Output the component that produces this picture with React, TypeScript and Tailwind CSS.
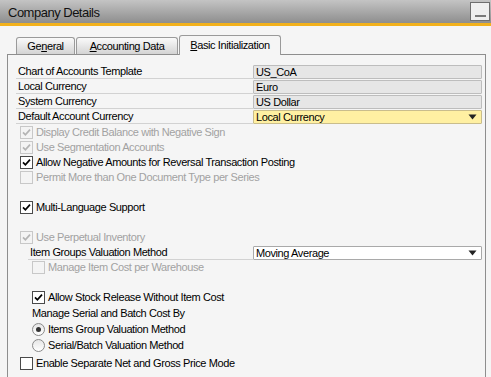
import React from "react";

function Check({ checked, disabled }: { checked?: boolean; disabled?: boolean }) {
  return (
    <span
      className={
        disabled
          ? "w-[13px] h-[13px] shrink-0 border border-[#c8c8c8] bg-[#f4f4f4] flex items-center justify-center"
          : "w-[13px] h-[13px] shrink-0 border border-[#4a4a4a] bg-white flex items-center justify-center"
      }
    >
      {checked && (
        <svg width="11" height="11" viewBox="0 0 11 11">
          <path d="M2 5.3 L4.4 7.8 L9 2.6" fill="none" stroke={disabled ? "#b4b4b4" : "#000"} strokeWidth="1.7" />
        </svg>
      )}
    </span>
  );
}

function Radio({ selected }: { selected?: boolean }) {
  return (
    <span className="w-[13px] h-[13px] shrink-0 rounded-full border border-[#8a8a8a] bg-gradient-to-b from-[#e6e6e6] to-white flex items-center justify-center">
      {selected && <span className="w-[5px] h-[5px] rounded-full bg-[#333]" />}
    </span>
  );
}

function Arrow() {
  return (
    <svg width="9" height="6" viewBox="0 0 9 6" className="mr-[4px]">
      <path d="M0.5 0.5 H8.5 L4.5 5.5 Z" fill="#222" />
    </svg>
  );
}

function FieldRow({ label, value, yellow, dropdown }: { label: string; value: string; yellow?: boolean; dropdown?: boolean }) {
  return (
    <div className="flex h-[15px] pl-[8px]">
      <div className="w-[237px] border-b border-[#d2d2d2] pl-[2px] flex items-center text-black leading-none">{label}</div>
      <div
        className={
          yellow
            ? "mt-[1px] h-[14px] w-[229px] border border-[#c9bd8c] bg-[#fff0a2] rounded-[1px] flex items-center justify-between pl-[2px] text-black leading-none"
            : "mt-[1px] h-[14px] w-[229px] border border-[#bdbdbd] bg-[#e6e6e6] rounded-[1px] flex items-center pl-[2px] text-black leading-none"
        }
      >
        <span>{value}</span>
        {dropdown && <Arrow />}
      </div>
    </div>
  );
}

function CheckRow({ label, checked, disabled, nested, className }: { label: string; checked?: boolean; disabled?: boolean; nested?: boolean; className?: string }) {
  return (
    <div className={(nested ? "pl-[24px] " : "pl-[12px] ") + "flex items-center h-[15px] gap-[3px] " + (className ?? "")}>
      <Check checked={checked} disabled={disabled} />
      <span className={disabled ? "text-[#a2a2a2] leading-none" : "text-black leading-none"}>{label}</span>
    </div>
  );
}

export default function App() {
  return (
    <div className="w-[491px] h-[377px] overflow-hidden bg-[#f5f5f5] font-['Liberation_Sans',Arial,sans-serif] text-[11px] tracking-[-0.4px] flex flex-col">
      {/* Title bar */}
      <div className="h-[23px] shrink-0 bg-gradient-to-b from-[#c4c4c4] to-[#8e8e8e] flex items-center justify-between pl-[8px] pr-[1px]">
        <span className="text-[13px] tracking-[-0.5px] text-[#111] leading-none mt-[2px]">Company Details</span>
        <div className="w-[20px] h-[19px] border border-[#6e6e6e] bg-[#efefef] flex items-end justify-center pb-[3px]">
          <span className="w-[11px] h-[2px] bg-[#7a7a7a]" />
        </div>
      </div>
      <div className="h-[3px] shrink-0 bg-[#f2b11c]" />

      {/* Tabs */}
      <div className="mt-[10px] h-[18px] shrink-0 flex items-end pl-[16px] gap-[1px]">
        <div className="h-[17px] w-[59px] border border-b-0 border-[#9a9a9a] rounded-t-[3px] bg-gradient-to-b from-[#fafafa] to-[#d4d4d4] flex items-center justify-center text-black leading-none">
          <span>Ge<span className="underline">n</span>eral</span>
        </div>
        <div className="h-[17px] w-[102px] border border-b-0 border-[#9a9a9a] rounded-t-[3px] bg-gradient-to-b from-[#fafafa] to-[#d4d4d4] flex items-center justify-center text-black leading-none">
          <span><span className="underline">A</span>ccounting Data</span>
        </div>
        <div className="relative z-10 -mb-px h-[20px] w-[102px] border border-b-0 border-[#9a9a9a] rounded-t-[3px] bg-[#f5f5f5] flex items-center justify-center text-black leading-none">
          <span className="-mt-[1px]"><span className="underline">B</span>asic Initialization</span>
        </div>
      </div>

      {/* Panel */}
      <div className="ml-[7px] w-[479px] flex-1 border border-b-0 border-[#8e8e8e] pt-[9px] flex flex-col">
        <FieldRow label="Chart of Accounts Template" value="US_CoA" />
        <FieldRow label="Local Currency" value="Euro" />
        <FieldRow label="System Currency" value="US Dollar" />
        <FieldRow label="Default Account Currency" value="Local Currency" yellow dropdown />

        <CheckRow className="mt-[1px]" label="Display Credit Balance with Negative Sign" checked disabled />
        <CheckRow label="Use Segmentation Accounts" checked disabled />
        <CheckRow label="Allow Negative Amounts for Reversal Transaction Posting" checked />
        <CheckRow label="Permit More than One Document Type per Series" disabled />

        <CheckRow className="mt-[15px]" label="Multi-Language Support" checked />

        <CheckRow className="mt-[15px]" label="Use Perpetual Inventory" checked disabled />
        <div className="flex h-[15px] pl-[20px]">
          <div className="w-[225px] border-b border-[#d2d2d2] pl-[2px] flex items-center text-black leading-none">Item Groups Valuation Method</div>
          <div className="mt-[1px] h-[14px] w-[229px] border border-[#a9a9a9] bg-white rounded-[1px] flex items-center justify-between pl-[2px] text-black leading-none">
            <span>Moving Average</span>
            <Arrow />
          </div>
        </div>
        <CheckRow nested label="Manage Item Cost per Warehouse" disabled />

        <CheckRow nested className="mt-[15px]" label="Allow Stock Release Without Item Cost" checked />
        <div className="mt-[1px] h-[15px] pl-[24px] flex items-center text-black leading-none">Manage Serial and Batch Cost By</div>
        <div className="mt-[1px] h-[15px] pl-[24px] flex items-center gap-[3px]">
          <Radio selected />
          <span className="text-black leading-none">Items Group Valuation Method</span>
        </div>
        <div className="mt-[1px] h-[15px] pl-[24px] flex items-center gap-[3px]">
          <Radio />
          <span className="text-black leading-none">Serial/Batch Valuation Method</span>
        </div>
        <CheckRow className="mt-[3px]" label="Enable Separate Net and Gross Price Mode" />
      </div>
    </div>
  );
}
